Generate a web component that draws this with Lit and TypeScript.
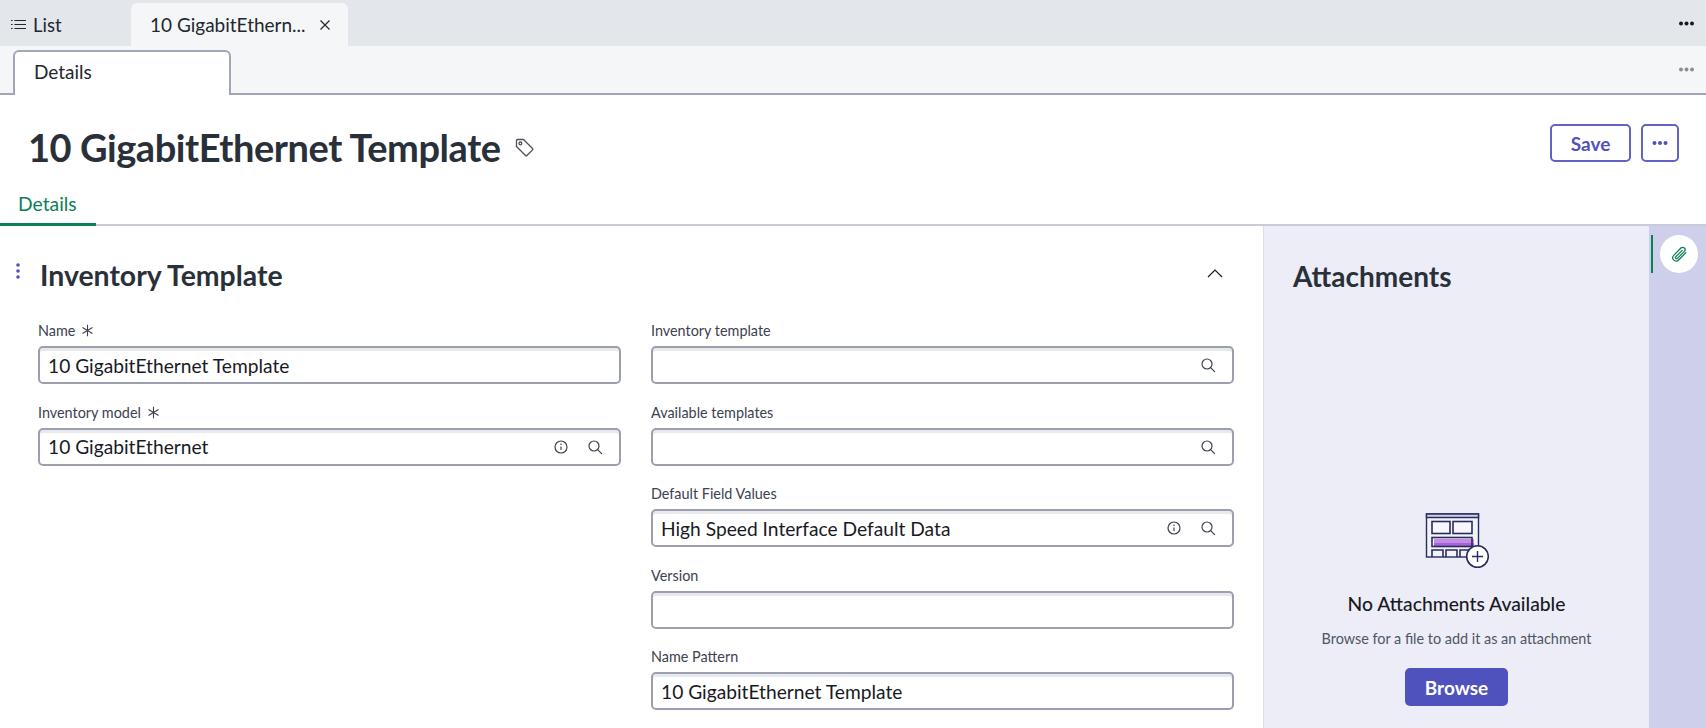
import { LitElement, html, css, svg } from 'lit';
import { customElement } from 'lit/decorators.js';

const searchIcon = svg`<circle cx="7" cy="7" r="5" fill="none" stroke="currentColor" stroke-width="1.2"/><path d="M10.7 10.7 14.6 14.6" fill="none" stroke="currentColor" stroke-width="1.2" stroke-linecap="round"/>`;
const infoIcon = svg`<circle cx="8" cy="8" r="6" fill="none" stroke="currentColor" stroke-width="1.2"/><path d="M8 7.4V11" fill="none" stroke="currentColor" stroke-width="1.2"/><circle cx="8" cy="5.2" r=".8" fill="currentColor"/>`;

interface Field {
  label: string;
  value?: string;
  required?: boolean;
  info?: boolean;
  search?: boolean;
}

const leftFields: Field[] = [
  { label: 'Name', value: '10 GigabitEthernet Template', required: true },
  { label: 'Inventory model', value: '10 GigabitEthernet', required: true, info: true, search: true },
];

const rightFields: Field[] = [
  { label: 'Inventory template', search: true },
  { label: 'Available templates', search: true },
  { label: 'Default Field Values', value: 'High Speed Interface Default Data', info: true, search: true },
  { label: 'Version' },
  { label: 'Name Pattern', value: '10 GigabitEthernet Template' },
];

@customElement('app-root')
export class AppRoot extends LitElement {
  static styles = css`
    :host {
      display: block;
      height: 728px;
      overflow: hidden;
      background: #fff;
      font-family: 'Lato', 'Liberation Sans', sans-serif;
      color: #181a1f;
    }

    svg {
      display: block;
      flex: none;
    }

    .tabbar {
      height: 46px;
      background: #e3e6eb;
      display: flex;
      align-items: flex-end;
      padding-right: 12px;
      box-sizing: border-box;
    }

    .list-tab {
      width: 131px;
      height: 43px;
      display: flex;
      align-items: center;
      gap: 7px;
      padding-left: 11px;
      box-sizing: border-box;
      font-size: 18.5px;
      color: #23272f;
    }

    .record-tab {
      width: 217px;
      height: 43px;
      background: #f5f6f8;
      border-radius: 6px 6px 0 0;
      display: flex;
      align-items: center;
      padding: 0 17px 0 19px;
      box-sizing: border-box;
      font-size: 19px;
      color: #23272f;
    }

    .record-tab span {
      flex: 1;
    }

    .dots {
      margin-left: auto;
      align-self: center;
    }

    .subbar {
      height: 49px;
      background: #f5f6f8;
      border-bottom: 2px solid #a3a6b6;
      box-sizing: border-box;
      display: flex;
      align-items: flex-end;
      padding: 0 12px 0 13px;
    }

    .sub-tab {
      width: 218px;
      height: 45px;
      margin-bottom: -2px;
      background: #fff;
      border: 2px solid #a3a6b6;
      border-bottom: none;
      border-radius: 6px 6px 0 0;
      box-sizing: border-box;
      padding: 0 0 4px 19px;
      display: flex;
      align-items: center;
      font-size: 19px;
      color: #23272f;
    }

    .subbar .dots {
      align-self: center;
      margin-top: -1px;
    }

    .header {
      height: 86px;
      display: flex;
      padding: 0 27px 0 28px;
      box-sizing: border-box;
    }

    .header h1 {
      margin: 22px 0 0;
      height: 60px;
      font-size: 38px;
      letter-spacing: -0.45px;
      line-height: 60px;
      font-weight: 700;
      color: #293039;
      white-space: nowrap;
    }

    .tag {
      margin: 43px 0 0 14px;
    }

    .actions {
      margin-left: auto;
      padding-top: 29px;
      display: flex;
      gap: 10px;
    }

    .btn {
      height: 38px;
      border: 2px solid #5f63c6;
      border-radius: 5px;
      box-sizing: border-box;
      display: flex;
      align-items: center;
      justify-content: center;
      color: #4f52bd;
      font-size: 19px;
      font-weight: 700;
    }

    .save {
      width: 81px;
    }

    .more {
      width: 38px;
    }

    .tabs {
      height: 45px;
      border-bottom: 2px solid #c9cbd8;
      box-sizing: border-box;
      display: flex;
    }

    .tabs div {
      width: 96px;
      height: 45px;
      box-sizing: border-box;
      padding: 11px 0 0 18px;
      border-bottom: 3px solid #0b7f57;
      font-size: 19.3px;
      line-height: 24px;
      color: #0b7f57;
    }

    .body {
      display: flex;
      height: 503px;
    }

    .main {
      width: 1264px;
      box-sizing: border-box;
      border-right: 1px solid #dcdee8;
    }

    .section-head {
      height: 94px;
      display: flex;
      align-items: center;
      padding: 0 39px 0 15px;
      box-sizing: border-box;
    }

    .kebab {
      margin-bottom: 4px;
    }

    .section-head h2 {
      margin: 4px 0 0 19px;
      font-size: 28.4px;
      font-weight: 700;
      color: #293039;
    }

    .chevron {
      margin-left: auto;
      color: #181a1f;
    }

    .form {
      display: grid;
      grid-template-columns: 583px 583px;
      gap: 30px;
      padding-left: 38px;
    }

    .col {
      display: flex;
      flex-direction: column;
      gap: 17.5px;
    }

    .label {
      height: 26px;
      padding-top: 1px;
      box-sizing: border-box;
      font-size: 14.4px;
      line-height: 20px;
      color: #3c4250;
      display: flex;
      align-items: flex-start;
      gap: 6px;
    }

    .label svg {
      margin-top: 3px;
    }

    .input {
      height: 38px;
      border: 2px solid #9c9fb0;
      border-radius: 5px;
      box-shadow: inset 0 3px 0 #e8e9ed;
      box-sizing: border-box;
      display: flex;
      align-items: center;
      gap: 18px;
      padding: 0 16px 0 8px;
      font-size: 19.2px;
      color: #181a1f;
      white-space: nowrap;
    }

    .input span {
      flex: 1;
    }

    .input svg {
      color: #3c4250;
    }

    .panel {
      width: 385px;
      background: #ecedf7;
      padding-top: 30px;
      box-sizing: border-box;
      display: flex;
      flex-direction: column;
    }

    .panel h2 {
      margin: 0 0 0 29px;
      font-size: 28px;
      line-height: 40px;
      font-weight: 700;
      color: #293039;
    }

    .empty {
      margin-top: 217px;
      display: flex;
      flex-direction: column;
      align-items: center;
    }

    .illustration {
      margin-left: 1px;
    }

    .empty h3 {
      margin: 22px 0 0;
      font-size: 19.3px;
      line-height: 26px;
      font-weight: 500;
      color: #181a1f;
    }

    .empty p {
      margin: 11px 0 0;
      font-size: 14.4px;
      line-height: 22px;
      color: #4f5564;
    }

    .browse {
      margin-top: 18px;
      width: 103px;
      height: 38px;
      background: #4f52bd;
      border-radius: 5px;
      color: #fff;
      font-size: 19px;
      font-weight: 700;
      display: flex;
      align-items: center;
      justify-content: center;
    }

    .rail {
      flex: 1;
      background: #cdcfeb;
      position: relative;
    }

    .rail-mark {
      position: absolute;
      left: 2px;
      top: 9px;
      width: 2px;
      height: 38px;
      background: #0b7f57;
    }

    .clip {
      position: absolute;
      left: 11px;
      top: 9px;
      width: 38px;
      height: 38px;
      border-radius: 50%;
      background: #fff;
      display: flex;
      align-items: center;
      justify-content: center;
      color: #0b7f57;
    }
  `;

  private dots(color: string) {
    return html`<svg class="dots" width="15" height="5" viewBox="0 0 15 5" fill=${color}>
      <circle cx="2" cy="2.5" r="2" /><circle cx="7.5" cy="2.5" r="2" /><circle cx="13" cy="2.5" r="2" />
    </svg>`;
  }

  private field(f: Field) {
    return html`<div>
      <div class="label">
        ${f.label}
        ${f.required
          ? html`<svg width="13" height="13" viewBox="0 0 13 13" fill="none" stroke="#3c4250" stroke-width="1.1">
              <path d="M6.5 .8V12.2M1.5 3.6 11.5 9.4M11.5 3.6 1.5 9.4" />
            </svg>`
          : ''}
      </div>
      <div class="input">
        <span>${f.value ?? ''}</span>
        ${f.info ? html`<svg width="16" height="16" viewBox="0 0 16 16">${infoIcon}</svg>` : ''}
        ${f.search ? html`<svg width="16" height="16" viewBox="0 0 16 16">${searchIcon}</svg>` : ''}
      </div>
    </div>`;
  }

  render() {
    return html`
      <div class="tabbar">
        <div class="list-tab">
          <svg width="15" height="11" viewBox="0 0 15 11" stroke="#23272f" stroke-width="1.1" fill="none">
            <path d="M0 1.5H1.6M0 5.5H1.6M0 9.5H1.6M3.4 1.5H15M3.4 5.5H15M3.4 9.5H15" />
          </svg>
          List
        </div>
        <div class="record-tab">
          <span>10 GigabitEthern...</span>
          <svg width="12" height="12" viewBox="0 0 12 12" stroke="#23272f" stroke-width="1.2" fill="none">
            <path d="M1.5 1.5 10.5 10.5M10.5 1.5 1.5 10.5" />
          </svg>
        </div>
        ${this.dots('#181a1f')}
      </div>

      <div class="subbar">
        <div class="sub-tab">Details</div>
        ${this.dots('#8b8e98')}
      </div>

      <div class="header">
        <h1>10 GigabitEthernet Template</h1>
        <svg class="tag" width="19" height="19" viewBox="0 0 19 19" fill="none" stroke="#4a4f5a" stroke-width="1.3">
          <path d="M1.5 2.5a1 1 0 0 1 1-1H8.5l9 9a1 1 0 0 1 0 1.4l-5.6 5.6a1 1 0 0 1-1.4 0l-9-9Z" stroke-linejoin="round" />
          <circle cx="5.4" cy="5.4" r="1.4" />
        </svg>
        <div class="actions">
          <div class="btn save">Save</div>
          <div class="btn more">
            <svg width="16" height="6" viewBox="0 0 16 6" fill="#4f52bd">
              <circle cx="2.5" cy="3" r="2" /><circle cx="8" cy="3" r="2" /><circle cx="13.5" cy="3" r="2" />
            </svg>
          </div>
        </div>
      </div>

      <div class="tabs"><div>Details</div></div>

      <div class="body">
        <div class="main">
          <div class="section-head">
            <svg class="kebab" width="6" height="16" viewBox="0 0 6 16" fill="#4f52bd">
              <circle cx="3" cy="2" r="1.8" /><circle cx="3" cy="8" r="1.8" /><circle cx="3" cy="14" r="1.8" />
            </svg>
            <h2>Inventory Template</h2>
            <svg class="chevron" width="18" height="10" viewBox="0 0 18 10" fill="none" stroke="currentColor" stroke-width="1.2">
              <path d="M2 9 9 2l7 7" />
            </svg>
          </div>
          <div class="form">
            <div class="col">${leftFields.map((f) => this.field(f))}</div>
            <div class="col">${rightFields.map((f) => this.field(f))}</div>
          </div>
        </div>

        <div class="panel">
          <h2>Attachments</h2>
          <div class="empty">
            <svg class="illustration" width="64" height="56" viewBox="0 0 64 56" fill="none" stroke="#2a2c5f" stroke-width="1.4">
              <rect x="1.5" y="1" width="52" height="43" fill="#f2f2fa" />
              <path d="M1.5 1H53.5V4.5H1.5Z" fill="#cfd2ee" />
              <rect x="7" y="8.5" width="18" height="12" fill="#f6f6fc" stroke-width="1.6" />
              <rect x="28" y="8.5" width="19" height="12" fill="#f6f6fc" stroke-width="1.6" />
              <rect x="9" y="26" width="40" height="4" fill="#c78ae6" stroke="none" />
              <rect x="9" y="30" width="40" height="4" fill="#a564d8" stroke="none" />
              <rect x="7" y="24.5" width="40" height="9" stroke-width="1.6" />
              <path d="M7 44V37H18V44M21 44V37H32V44M35 44V37H46V44" stroke-width="1.6" />
              <circle cx="52.5" cy="43.5" r="10.8" fill="#fff" stroke-width="1.6" />
              <path d="M52.5 38V49M47 43.5H58" />
            </svg>
            <h3>No Attachments Available</h3>
            <p>Browse for a file to add it as an attachment</p>
            <div class="browse">Browse</div>
          </div>
        </div>

        <div class="rail">
          <div class="rail-mark"></div>
          <div class="clip">
            <svg width="16" height="16" viewBox="0 0 16 16" fill="none" stroke="currentColor" stroke-width="1.25" stroke-linecap="round">
              <path d="M14.8 6.8 7.6 14a3.3 3.3 0 0 1-4.9-4.6L9.9 2a2.4 2.4 0 0 1 3.5 3.4L6.4 12.4a1.1 1.1 0 0 1-1.6-1.6L11.2 4.4" />
            </svg>
          </div>
        </div>
      </div>
    `;
  }
}

declare global {
  interface HTMLElementTagNameMap {
    'app-root': AppRoot;
  }
}
